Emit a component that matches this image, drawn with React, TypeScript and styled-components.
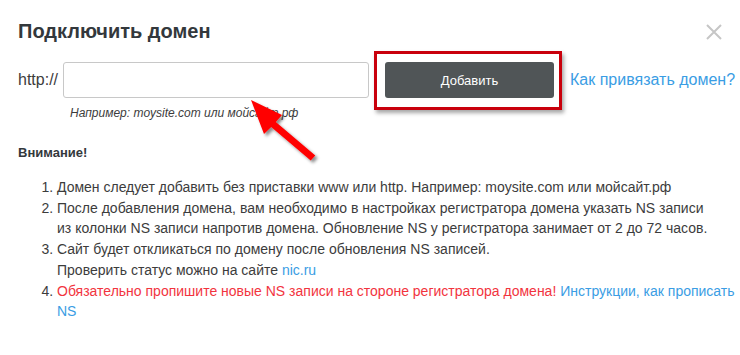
import styled, {createGlobalStyle} from 'styled-components';

const GlobalStyle = createGlobalStyle`
  html, body {
    margin: 0;
    padding: 0;
    background: #fff;
  }
  body {
    font-family: "Liberation Sans", Arial, sans-serif;
    color: #3c3c3c;
  }
`;

const App = () => {
  return (
    <>
      <GlobalStyle />
      <Dialog>
        <Header>
          <Title>Подключить домен</Title>
          <CloseBtn aria-label="Закрыть">
            <svg width="16" height="16" viewBox="0 0 16 16">
              <path d="M1 1 L15 15 M15 1 L1 15" stroke="#c6c6c6" strokeWidth="2" />
            </svg>
          </CloseBtn>
        </Header>
        <FormRow>
          <Prefix>http://</Prefix>
          <DomainInput type="text" />
          <Highlight>
            <AddButton>Добавить</AddButton>
          </Highlight>
          <HelpLink href="#">Как привязать домен?</HelpLink>
        </FormRow>
        <Hint>Например: moysite.com или мойсайт.рф</Hint>
        <WarnTitle>Внимание!</WarnTitle>
        <Steps>
          <li>
            Домен следует добавить без приставки www или http. Например: moysite.com или мойсайт.рф
          </li>
          <li>
            После добавления домена, вам необходимо в настройках регистратора домена указать NS записи
            <br />
            из колонки NS записи напротив домена. Обновление NS у регистратора занимает от 2 до 72 часов.
          </li>
          <li>
            Сайт будет откликаться по домену после обновления NS записей.
            <br />
            Проверить статус можно на сайте <TextLink href="#">nic.ru</TextLink>
          </li>
          <li>
            <Danger>Обязательно пропишите новые NS записи на стороне регистратора домена!</Danger>{' '}
            <TextLink href="#">Инструкции, как прописать NS</TextLink>
          </li>
        </Steps>
        <Arrow width="90" height="80" viewBox="240 90 90 80">
          <defs>
            <filter id="arrowShadow" x="-20%" y="-20%" width="150%" height="150%">
              <feDropShadow dx="2.5" dy="2.5" stdDeviation="1.6" floodColor="#000" floodOpacity="0.45" />
            </filter>
          </defs>
          <polygon
            points="251,100 282,115 275.8,121.9 315.3,155.4 310.7,160.6 271.2,127.1 264,134"
            fill="#ff0000"
            filter="url(#arrowShadow)"
          />
        </Arrow>
      </Dialog>
    </>
  );
};

const Dialog = styled.div`
  position: relative;
  width: 740px;
  height: 355px;
  box-sizing: border-box;
  padding: 19px 0 0 18px;
  overflow: hidden;
`;

const Header = styled.div`
  display: flex;
  justify-content: space-between;
  align-items: center;
  padding-right: 18px;
`;

const Title = styled.h2`
  margin: 0;
  font-size: 20px;
  line-height: 24px;
  font-weight: 700;
  color: #33383c;
`;

const CloseBtn = styled.button`
  display: flex;
  border: 0;
  background: none;
  padding: 0;
  margin-top: 2px;
  cursor: pointer;
`;

const FormRow = styled.div`
  display: flex;
  align-items: center;
  margin-top: 19px;
`;

const Prefix = styled.span`
  font-size: 16px;
  color: #3c3c3c;
`;

const DomainInput = styled.input`
  box-sizing: border-box;
  width: 306px;
  height: 36px;
  margin-left: 5px;
  border: 1px solid #c8c8c8;
  border-radius: 3px;
  padding: 0 10px;
  font: inherit;
  outline: none;
`;

const Highlight = styled.div`
  position: relative;
  margin-left: 16px;
  &::after {
    content: '';
    position: absolute;
    inset: -11px -8px -12px -11px;
    border: 3px solid #c9000c;
    box-shadow: 2px 3px 4px rgba(0, 0, 0, 0.35);
    pointer-events: none;
  }
`;

const AddButton = styled.button`
  display: block;
  width: 169px;
  height: 36px;
  border: 0;
  border-radius: 3px;
  background: #505557;
  color: #fff;
  font-family: "Liberation Sans", Arial, sans-serif;
  font-size: 13px;
  cursor: pointer;
`;

const HelpLink = styled.a`
  margin-left: 16px;
  font-size: 16px;
  color: #3a9de4;
  text-decoration: none;
  white-space: nowrap;
`;

const Hint = styled.div`
  margin: 8px 0 0 52px;
  font-size: 12px;
  line-height: 14px;
  font-style: italic;
  color: #3c3c3c;
`;

const WarnTitle = styled.div`
  margin-top: 25px;
  font-size: 13px;
  line-height: 16px;
  font-weight: 700;
  color: #33383c;
`;

const Steps = styled.ol`
  margin: 16px 0 0;
  padding-left: 39px;
  font-size: 14px;
  line-height: 20.7px;
  color: #3c3c3c;
`;

const TextLink = styled.a`
  color: #3a9de4;
  text-decoration: none;
`;

const Danger = styled.span`
  color: #f2343e;
`;

const Arrow = styled.svg`
  position: absolute;
  left: 240px;
  top: 90px;
  pointer-events: none;
`;

export default App;
